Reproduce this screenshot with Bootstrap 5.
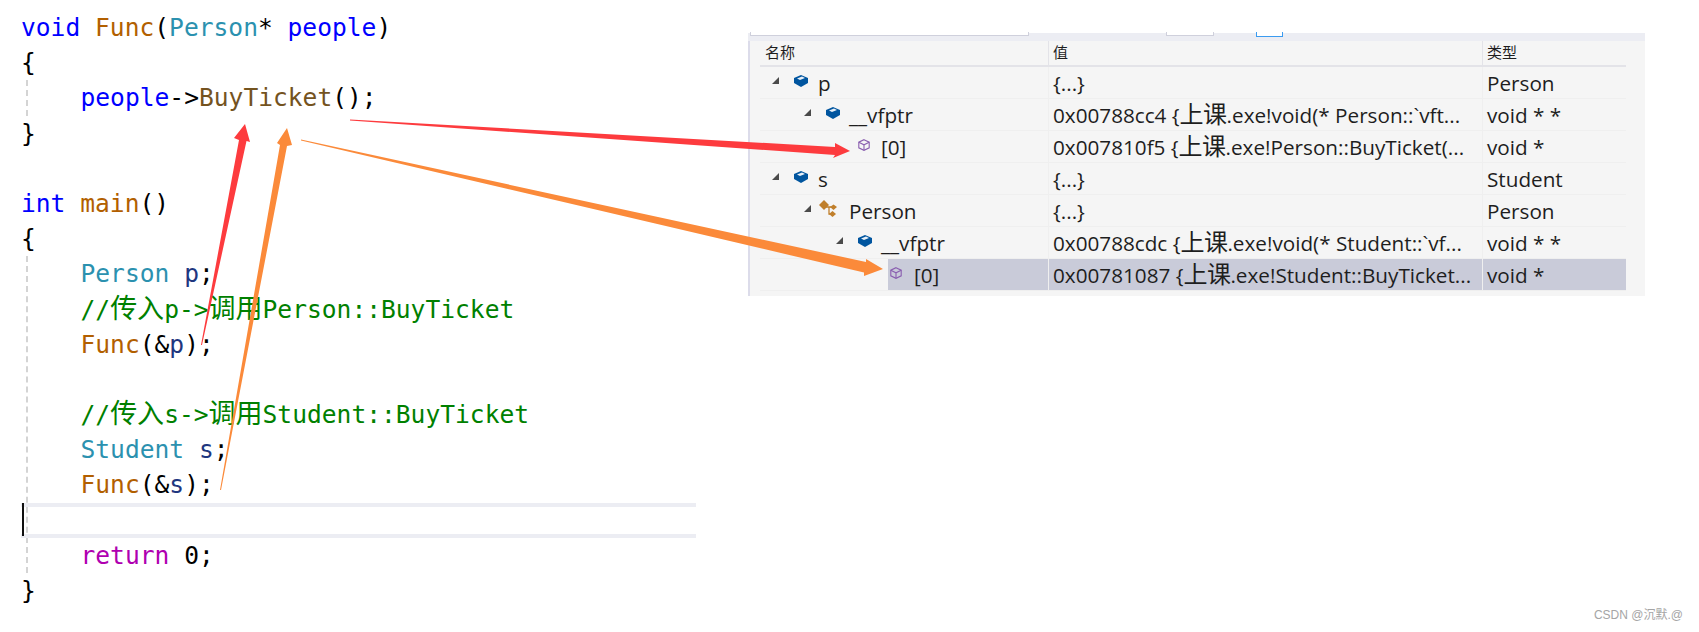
<!DOCTYPE html>
<html lang="zh">
<head>
<meta charset="utf-8">
<title>Func</title>
<link href="https://cdn.jsdelivr.net/npm/bootstrap@5.3.0/dist/css/bootstrap.min.css" rel="stylesheet">
<style>
body{background:#fff;margin:0;color:#000}
.stage{height:632px;overflow:hidden}
.codecol{width:748px;flex:none;padding:10px 0 0 0;font-family:"DejaVu Sans Mono","Noto Sans CJK SC",monospace;font-size:24.6px}
.ln{height:35.2px;line-height:35.2px;padding-left:21px;white-space:pre}
.blk{margin-left:26px;border-left:2px dashed #d4d4d4}
.blk .ln{padding-left:52.5px}
.curline{margin-left:-7px;width:675px;height:35px;border-top:4px solid #ecedf3;border-bottom:4px solid #ecedf3;position:relative}
.caret-bar{position:absolute;left:1px;top:-4px;width:2px;height:33px;background:#111}
.hz{font-family:"Noto Sans CJK SC",sans-serif;font-size:27px;line-height:1}
.k{color:#0000ff}.f{color:#b25f00}.t{color:#2b91af}.v{color:#1f377f}.m{color:#74531f}.c{color:#008000}.r{color:#af00b0}
.rightcol{flex:1 1 auto;padding-top:33px}
.panel{width:897px;height:263px;background:#f5f5f5;border-left:2px solid #dcdcea;font-family:"Open Sans","Noto Sans CJK SC",sans-serif;font-size:20.7px;color:#1e1e1e;position:relative}
.topstrip{height:8px;background:#ecedf3;margin-left:-2px;position:relative}
.tabw{position:absolute;top:-1px;height:4px;background:#fff;border:1px solid #cfd0dc;border-top:0}
.tab-one{left:2px;width:279px}
.tab-two{left:418px;width:48px}
.tabb{position:absolute;top:-1px;left:508px;width:27px;height:5px;background:#fff;border:1px solid #3b9bf0;border-top:0}
.hdr{height:26px;margin-left:10px;width:866px;border-bottom:2px solid #e3e3e8;font-size:15px;line-height:23px}
.hdr>div{border-left:1px solid #e3e3e8;padding-left:4px}
.rw{height:32px;margin-left:10px;width:866px;border-bottom:1px solid #efefef;line-height:33px;white-space:nowrap}
.cn{width:288px;flex:none}
.cv{width:434px;flex:none;padding-left:4px;border-left:1px solid #efefef}
.ct{width:144px;flex:none;padding-left:4px;border-left:1px solid #efefef}
.hdr .cn{border-left:0;padding-left:5px}
.lv1{margin-left:32px}.lv2{margin-left:64px}.lv3{margin-left:96px}
.tw{width:32px;flex:none;padding:10px 0 0 12px}
.tw svg,.ic svg{display:block}
.ic{width:26px;flex:none;padding:8px 0 0 2px}
.lv1+.ic,.lv2+.ic{width:25px}
.ic-base{padding:5px 0 0 0;margin-left:-5px}
.lv1+.ic-base{width:30px}
.nm{flex:1 1 auto}
.sel,.rw .sel{background:#c9cbd9}
.cjk-v{font-size:24px;font-family:"Noto Sans CJK SC",sans-serif;line-height:1;letter-spacing:-.5px}
.wm{margin-top:auto;padding:0 16px 9px 0;text-align:right;color:#a5a5a5;font:12px/16px "Liberation Sans","Noto Sans CJK SC",sans-serif}
.arrows{position:absolute;left:0;top:0;width:1699px;height:632px;pointer-events:none}
</style>
</head>
<body>
<div class="stage d-flex position-relative">
  <div class="codecol">
    <div class="ln"><span class="k">void</span> <span class="f">Func</span>(<span class="t">Person</span>* <span class="k">people</span>)</div>
    <div class="ln">{</div>
    <div class="blk"><div class="ln"><span class="k">people</span>-&gt;<span class="m">BuyTicket</span>();</div></div>
    <div class="ln">}</div>
    <div class="ln"> </div>
    <div class="ln"><span class="k">int</span> <span class="f">main</span>()</div>
    <div class="ln">{</div>
    <div class="blk">
      <div class="ln"><span class="t">Person</span> <span class="v">p</span>;</div>
      <div class="ln c">//<span class="hz">传入</span>p-&gt;<span class="hz">调用</span>Person::BuyTicket</div>
      <div class="ln"><span class="f">Func</span>(&amp;<span class="v">p</span>);</div>
      <div class="ln"> </div>
      <div class="ln c">//<span class="hz">传入</span>s-&gt;<span class="hz">调用</span>Student::BuyTicket</div>
      <div class="ln"><span class="t">Student</span> <span class="v">s</span>;</div>
      <div class="ln"><span class="f">Func</span>(&amp;<span class="v">s</span>);</div>
      <div class="curline"><div class="caret-bar"></div></div>
      <div class="ln"><span class="r">return</span> 0;</div>
    </div>
    <div class="ln">}</div>
  </div>

  <div class="rightcol d-flex flex-column">
    <div class="panel">
      <div class="topstrip">
        <div class="tabw tab-one"></div>
        <div class="tabw tab-two"></div>
        <div class="tabb"></div>
      </div>
      <div class="hdr d-flex"><div class="cn">名称</div><div class="cv">值</div><div class="ct">类型</div></div>

      <div class="rw d-flex">
        <div class="cn d-flex"><div class="tw"><svg width="8" height="8"><use href="#tri"/></svg></div><div class="ic"><svg width="14" height="12"><use href="#cube"/></svg></div><div class="nm">p</div></div>
        <div class="cv">{...}</div><div class="ct">Person</div>
      </div>
      <div class="rw d-flex">
        <div class="cn d-flex"><div class="tw lv1"><svg width="8" height="8"><use href="#tri"/></svg></div><div class="ic"><svg width="14" height="12"><use href="#cube"/></svg></div><div class="nm">__vfptr</div></div>
        <div class="cv">0x00788cc4 {<span class="cjk-v">上课</span>.exe!void(* Person::`vft...</div><div class="ct">void * *</div>
      </div>
      <div class="rw d-flex">
        <div class="cn d-flex"><div class="tw lv2"></div><div class="ic"><svg width="12" height="12"><use href="#box"/></svg></div><div class="nm">[0]</div></div>
        <div class="cv">0x007810f5 {<span class="cjk-v">上课</span>.exe!Person::BuyTicket(...</div><div class="ct">void *</div>
      </div>
      <div class="rw d-flex">
        <div class="cn d-flex"><div class="tw"><svg width="8" height="8"><use href="#tri"/></svg></div><div class="ic"><svg width="14" height="12"><use href="#cube"/></svg></div><div class="nm">s</div></div>
        <div class="cv">{...}</div><div class="ct">Student</div>
      </div>
      <div class="rw d-flex">
        <div class="cn d-flex"><div class="tw lv1"><svg width="8" height="8"><use href="#tri"/></svg></div><div class="ic ic-base"><svg width="18" height="17"><use href="#base"/></svg></div><div class="nm">Person</div></div>
        <div class="cv">{...}</div><div class="ct">Person</div>
      </div>
      <div class="rw d-flex">
        <div class="cn d-flex"><div class="tw lv2"><svg width="8" height="8"><use href="#tri"/></svg></div><div class="ic"><svg width="14" height="12"><use href="#cube"/></svg></div><div class="nm">__vfptr</div></div>
        <div class="cv">0x00788cdc {<span class="cjk-v">上课</span>.exe!void(* Student::`vf...</div><div class="ct">void * *</div>
      </div>
      <div class="rw d-flex">
        <div class="cn d-flex"><div class="tw lv3"></div><div class="ic sel"><svg width="12" height="12"><use href="#box"/></svg></div><div class="nm sel">[0]</div></div>
        <div class="cv sel">0x00781087 {<span class="cjk-v">上课</span>.exe!Student::BuyTicket...</div><div class="ct sel">void *</div>
      </div>
    </div>
    <div class="wm">CSDN @沉默.@</div>
  </div>

  <svg class="arrows" viewBox="0 0 1699 632" aria-hidden="true">
    <defs>
      <polygon id="tri" points="7,0 7,7 0,7" fill="#4a4a4a"/>
      <g id="cube">
        <polygon points="0,3 7,0 14,3 14,8 7,12 0,8" fill="#00559f"/>
        <polygon points="3,3.5 8,1.5 11,3 6,5" fill="#e8f0f8"/>
      </g>
      <g id="box" fill="none" stroke="#8a5fb0" stroke-width="1.1">
        <polygon points="6,.7 11.2,3.2 11.2,8.8 6,11.3 .8,8.8 .8,3.2"/>
        <path d="M.8 3.2 6 5.8 11.2 3.2M6 5.8V11.3"/>
      </g>
      <g id="base">
        <polygon points="0,5 5,0 10,5 5,10" fill="#c07f2b"/>
        <polygon points="11,7 14.5,4.5 18,7 14.5,10" fill="#c07f2b"/>
        <polygon points="10,14 13.5,11 17,14 13.5,17" fill="#c07f2b"/>
        <path d="M7 7H12M10 7V14H12" stroke="#c07f2b" stroke-width="1.3" fill="none"/>
      </g>
    </defs>
    <polygon fill="#fd3b3e" points="201,345 239,140 234,138 245,124 250,142 246.5,141 202,345"/>
    <polygon fill="#fb8a3a" points="220,490 280,145 277,143 287,128 292,145 287,146 221,490"/>
    <polygon fill="#fd3b3e" points="350,119.5 835,147 835,143 850,151 833,158 835,155 350,120.5"/>
    <polygon fill="#fb8a3a" points="301,139.5 866,262 866,259 883,269 864,276 864,272.5 301,140.5"/>
  </svg>
</div>
<script src="https://cdn.jsdelivr.net/npm/bootstrap@5.3.0/dist/js/bootstrap.bundle.min.js"></script>
</body>
</html>
